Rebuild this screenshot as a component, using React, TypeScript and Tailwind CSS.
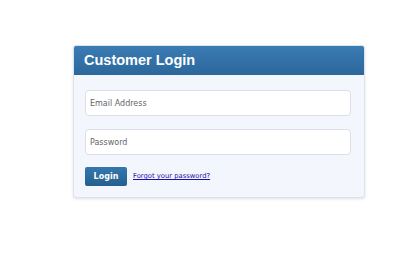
import React from "react";

const App = () => {
  return (
    <div className="w-[420px] h-[280px] bg-white pt-[45px] pl-[73px]" style={{ fontFamily: "Verdana, 'DejaVu Sans', sans-serif" }}>
      <div className="w-[292px] rounded-[3px] border border-[#dde2ec] bg-[#f4f6fd] shadow-[0_1px_3px_rgba(0,0,0,0.12)] overflow-hidden">
        <div className="h-[29px] bg-gradient-to-b from-[#3b7cb4] to-[#2b679b] px-[10px] flex items-center">
          <h2 className="text-white text-[14.5px] font-bold font-['Liberation_Sans',Arial,sans-serif]">
            Customer Login
          </h2>
        </div>
        <form className="px-[11px] pt-[15px] pb-[11px] flex flex-col">
          <input
            type="email"
            placeholder="Email Address"
            className="h-[26px] w-[266px] rounded-[4px] border border-[#dcdfe6] bg-white px-[4px] text-[8px] text-[#555] placeholder:text-[#666] outline-none font-['DejaVu_Sans',sans-serif]"
          />
          <input
            type="password"
            placeholder="Password"
            className="mt-[13px] h-[26px] w-[266px] rounded-[4px] border border-[#dcdfe6] bg-white px-[4px] text-[8px] text-[#555] placeholder:text-[#666] outline-none font-['DejaVu_Sans',sans-serif]"
          />
          <div className="mt-[12px] flex items-center gap-[6px]">
            <button
              type="submit"
              className="h-[19px] w-[42px] rounded-[2px] bg-gradient-to-b from-[#3577ad] to-[#24608f] text-white text-[8px] font-bold font-['DejaVu_Sans',sans-serif]"
            >
              Login
            </button>
            <a href="#" className="text-[#1a0dab] underline text-[6.8px] font-['DejaVu_Sans',sans-serif]">
              Forgot your password?
            </a>
          </div>
        </form>
      </div>
    </div>
  );
};

export default App;
